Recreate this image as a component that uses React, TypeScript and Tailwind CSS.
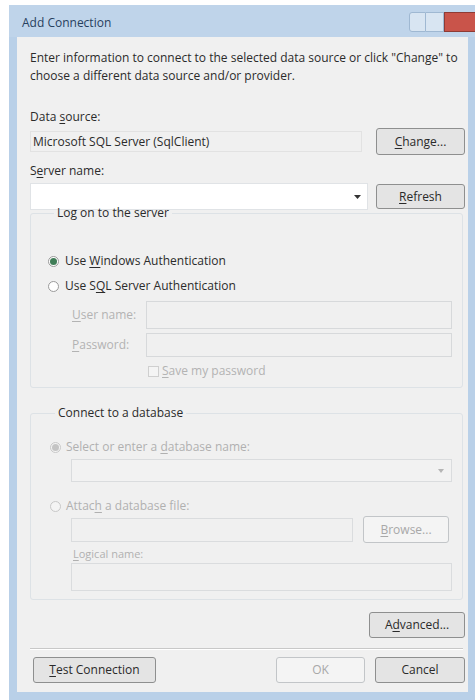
import React from "react";

type BtnProps = {
  children: React.ReactNode;
  className?: string;
  disabled?: boolean;
};

const Btn = ({ children, className = "", disabled }: BtnProps) => (
  <div
    className={`flex items-center justify-center rounded-[3px] border ${
      disabled
        ? "border-[#c2c5c8] bg-[#f4f4f4] text-[#a8a8a8]"
        : "border-[#8e8f8f] bg-[#e4e4e4] text-[#2a2a2a]"
    } ${className}`}
  >
    {children}
  </div>
);

const U = ({ children }: { children: React.ReactNode }) => (
  <span className="underline underline-offset-2">{children}</span>
);

const Radio = ({ checked, disabled }: { checked?: boolean; disabled?: boolean }) => (
  <div
    className={`flex h-[11px] w-[11px] shrink-0 items-center justify-center rounded-full border ${
      disabled ? "border-[#c8c8c8] bg-[#f4f4f4]" : "border-[#9a9a9a] bg-white"
    }`}
  >
    {checked && (
      <div
        className={`h-[7px] w-[7px] rounded-full ${
          disabled ? "bg-[#c4c4c4]" : "bg-[#3f7d57]"
        }`}
      />
    )}
  </div>
);

const Box = ({ className = "", children }: { className?: string; children?: React.ReactNode }) => (
  <div className={`border border-[#d7d9db] bg-[#f0f0f0] ${className}`}>{children}</div>
);

// caption strip with the min / max / close buttons
const TitleBar = () => (
  <div className="flex h-[32px] shrink-0 items-start bg-[#bfd4ea] pl-[13px]">
    <span className="mt-[9px] text-[12px] text-[#27405e]">Add Connection</span>
    <div className="ml-auto mt-[7px] flex h-[20px] shrink-0">
      <div className="w-[17px] shrink-0 rounded-l-[3px] border border-[#9fb8d2] bg-[#d8e5f2]" />
      <div className="w-[18px] shrink-0 border-y border-r border-[#9fb8d2] bg-[#d8e5f2]" />
      <div className="w-[31px] shrink-0 border-y border-l border-[#8e3b35] bg-[#c9544a]" />
    </div>
  </div>
);

export default function App() {
  return (
    <div className="h-[700px] w-[475px] bg-white pl-[9px] pt-[5px] font-['Open_Sans','Noto_Sans',sans-serif] text-[12px] leading-[18px] text-[#2b2b2b]">
      <div className="flex h-[695px] flex-col bg-[#b9d0e8]">
        <TitleBar />
        <div className="mb-[8px] ml-[8px] mr-[7px] flex flex-1 flex-col bg-[#f0f0f0] pl-[13px] pr-[3px]">
          {/* intro */}
          <p className="mt-[12px] pr-[2px]">
            Enter information to connect to the selected data source or click "Change" to choose a
            different data source and/or provider.
          </p>

          {/* data source */}
          <div className="mt-[23px]">
            Data <U>s</U>ource:
          </div>
          <div className="mt-[2px] flex h-[27px] items-center">
            <Box className="flex h-[21px] w-[332px] items-center border-[#e2e2e2] px-[2px]">
              Microsoft SQL Server (SqlClient)
            </Box>
            <Btn className="ml-auto h-[27px] w-[89px]">
              <U>C</U>hange...
            </Btn>
          </div>

          {/* server name */}
          <div className="mt-[7px]">
            S<U>e</U>rver name:
          </div>
          <div className="mt-[3px] flex h-[27px] items-center">
            <div className="flex h-[27px] w-[338px] items-center justify-end border border-[#e0e3e6] bg-white pr-[6px]">
              <svg width="7" height="4" viewBox="0 0 7 4">
                <path d="M0 0h7L3.5 4z" fill="#333" />
              </svg>
            </div>
            <Btn className="ml-auto h-[25px] w-[89px]">
              <U>R</U>efresh
            </Btn>
          </div>

          {/* log on group */}
          <fieldset className="mr-[2px] mt-[-6px] h-[184px] rounded-[3px] border border-[#dde2e6] pl-[17px] pr-[10px]">
            <legend className="ml-[6px] px-[3px]">Log on to the server</legend>
            <div className="mt-[30px] flex h-[18px] items-center gap-[6px]">
              <Radio checked />
              <span>
                Use <U>W</U>indows Authentication
              </span>
            </div>
            <div className="mt-[7px] flex h-[18px] items-center gap-[6px]">
              <Radio />
              <span>
                Use S<U>Q</U>L Server Authentication
              </span>
            </div>
            <div className="mt-[6px] flex h-[28px] items-center text-[#b3b3b3]">
              <span className="w-[98px] pl-[24px]">
                <U>U</U>ser name:
              </span>
              <Box className="h-[28px] flex-1" />
            </div>
            <div className="mt-[4px] flex h-[24px] items-center text-[#b3b3b3]">
              <span className="w-[98px] pl-[24px]">
                <U>P</U>assword:
              </span>
              <Box className="h-[24px] flex-1" />
            </div>
            <div className="mt-[5px] flex h-[18px] items-center gap-[3px] pl-[100px] text-[#b3b3b3]">
              <div className="h-[11px] w-[11px] border border-[#cfcfcf] bg-[#f4f4f4]" />
              <span>
                <U>S</U>ave my password
              </span>
            </div>
          </fieldset>

          {/* database group */}
          <fieldset className="mr-[2px] mt-[16px] h-[196px] rounded-[3px] border border-[#dde2e6] pl-[19px] pr-[10px] text-[#b0b0b0]">
            <legend className="ml-[5px] px-[3px] text-[#2b2b2b]">Connect to a database</legend>
            <div className="mt-[16px] flex h-[18px] items-center gap-[5px]">
              <Radio checked disabled />
              <span>
                Select or enter a <U>d</U>atabase name:
              </span>
            </div>
            <div className="ml-[21px] mt-[3px] flex h-[23px] items-center justify-end border border-[#dadcde] bg-[#f2f2f2] pr-[7px]">
              <svg width="6" height="4" viewBox="0 0 6 4">
                <path d="M0 0h6L3 4z" fill="#b5b5b5" />
              </svg>
            </div>
            <div className="mt-[15px] flex h-[18px] items-center gap-[5px]">
              <Radio disabled />
              <span>
                Attac<U>h</U> a database file:
              </span>
            </div>
            <div className="ml-[21px] mt-[1px] flex h-[27px] items-center">
              <Box className="h-[24px] w-[282px] border-[#dadcde]" />
              <Btn disabled className="ml-[10px] h-[27px] w-[86px]">
                <U>B</U>rowse...
              </Btn>
            </div>
            <div className="ml-[23px] mt-[3px] h-[16px] text-[11px] leading-[16px]">
              <U>L</U>ogical name:
            </div>
            <Box className="ml-[21px] mt-[1px] h-[28px] border-[#dadcde]" />
          </fieldset>

          {/* advanced */}
          <div className="mt-[12px] flex justify-end">
            <Btn className="h-[26px] w-[96px]">
              A<U>d</U>vanced...
            </Btn>
          </div>

          <div className="mr-[2px] mt-[10px] h-[2px] border-t border-[#c8c8c8] bg-white" />

          {/* bottom buttons */}
          <div className="mt-[7px] flex h-[26px] items-center">
            <Btn className="ml-[3px] h-[26px] w-[123px]">
              <U>T</U>est Connection
            </Btn>
            <Btn disabled className="ml-auto h-[26px] w-[89px]">
              OK
            </Btn>
            <Btn className="ml-[10px] h-[26px] w-[90px]">Cancel</Btn>
          </div>
        </div>
      </div>
    </div>
  );
}
